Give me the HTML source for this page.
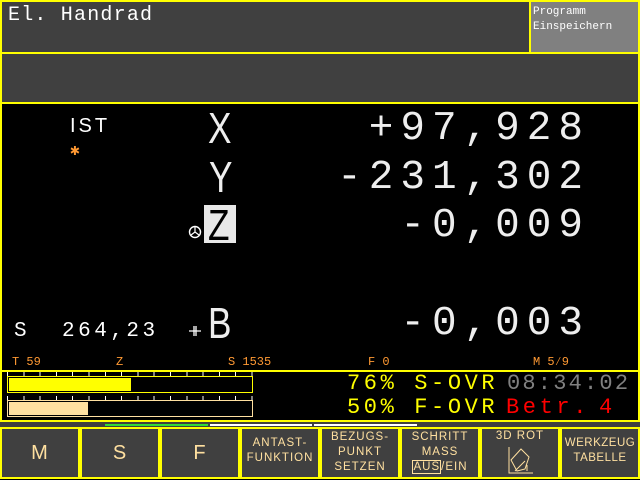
<!DOCTYPE html>
<html><head><meta charset="utf-8"><style>
*{margin:0;padding:0;box-sizing:border-box}
body{width:640px;height:480px;background:#000;position:relative;overflow:hidden;font-family:"Liberation Mono","DejaVu Sans Mono",monospace;color:#fff}
.a{position:absolute}
.big{position:absolute;right:50px;font-size:41px;letter-spacing:7px;line-height:1;white-space:pre;color:#eee}
.ax{position:absolute;font-size:44px;line-height:1;font-family:"Liberation Sans",sans-serif;transform:scaleX(0.8);transform-origin:left top;color:#eee}
.sk{position:absolute;top:427px;width:80px;height:52px;background:#404040;border:2px solid #ffff00;color:#ffe0a0;text-align:center;font-family:"Liberation Sans",sans-serif;font-size:11.5px;line-height:15px;letter-spacing:1px}
.or{position:absolute;top:355px;color:#ff9933;font-size:12px}
.tk{position:absolute;width:246px;height:4px;background:repeating-linear-gradient(90deg,#fff 0 1px,transparent 1px 16.3px)}
</style></head><body>
<div class="a" style="left:0;top:0;width:640px;height:104px;background:#ffff00"></div>
<div class="a" style="left:2px;top:2px;width:527px;height:50px;background:#404040"></div>
<div class="a" style="left:531px;top:2px;width:107px;height:50px;background:#808080"></div>
<div class="a" style="left:2px;top:54px;width:636px;height:48px;background:#404040"></div>
<div class="a" style="left:8px;top:4px;font-size:20px;letter-spacing:1.2px">El. Handrad</div>
<div class="a" style="left:533px;top:5px;font-size:11px;line-height:15px;color:#fff">Programm<br>Einspeichern</div>
<div class="a" style="left:0;top:104px;width:2px;height:320px;background:#ffff00"></div>
<div class="a" style="left:638px;top:104px;width:2px;height:320px;background:#ffff00"></div>
<div class="a" style="left:70px;top:115px;font-size:20px;letter-spacing:3px;font-family:'Liberation Sans',sans-serif">IST</div>
<div class="a" style="left:70px;top:140px;font-size:16px;color:#ff9933">✱</div>
<div class="ax" style="left:208px;top:107px">X</div>
<div class="ax" style="left:209px;top:156px">Y</div>
<div class="a" style="left:204px;top:205px;width:32px;height:38px;background:#e8e8e8"></div>
<div class="ax" style="left:208px;top:204px;color:#000">Z</div>
<svg class="a" style="left:188px;top:225px" width="14" height="14" viewBox="0 0 14 14"><circle cx="7" cy="7" r="5.5" fill="none" stroke="#fff" stroke-width="1.4"/><path d="M7 7V2M7 7L3 10M7 7L11 10" stroke="#fff" stroke-width="1.2"/></svg>
<div class="ax" style="left:208px;top:302px">B</div>
<svg class="a" style="left:188px;top:324px" width="14" height="14" viewBox="0 0 14 14"><path d="M1 7H13M6 2V12M8 2V12" stroke="#fff" stroke-width="1.3"/></svg>
<div class="a" style="left:14px;top:320px;font-size:21px">S</div>
<div class="a" style="left:62px;top:320px;font-size:21px;letter-spacing:3.5px">264,23</div>
<div class="big" style="top:109px">+97,928</div>
<div class="big" style="top:158px">-231,302</div>
<div class="big" style="top:206px">-0,009</div>
<div class="big" style="top:304px">-0,003</div>
<div class="or" style="left:12px">T 59</div>
<div class="or" style="left:116px">Z</div>
<div class="or" style="left:228px">S 1535</div>
<div class="or" style="left:368px">F 0</div>
<div class="or" style="left:533px">M 5⁄9</div>
<div class="a" style="left:0;top:370px;width:640px;height:2px;background:#ffff00"></div>
<div class="a" style="left:0;top:420px;width:640px;height:2px;background:#ffff00"></div>
<div class="a" style="left:7px;top:376px;width:246px;height:17px;border:1px solid #ffff00"></div>
<div class="a" style="left:9px;top:378px;width:122px;height:13px;background:#ffff00"></div>
<div class="a" style="left:7px;top:400px;width:246px;height:17px;border:1px solid #ffe0a0"></div>
<div class="a" style="left:9px;top:402px;width:79px;height:13px;background:#ffe0a0"></div>
<div class="tk" style="left:7px;top:372px"></div>
<div class="tk" style="left:7px;top:396px"></div>
<div class="a" style="left:347px;top:372px;font-size:22px;line-height:24px;color:#ffff00;letter-spacing:3.6px;white-space:pre">76% S-OVR</div>
<div class="a" style="left:347px;top:396px;font-size:22px;line-height:24px;color:#ffff00;letter-spacing:3.6px;white-space:pre">50% F-OVR</div>
<div class="a" style="left:507px;top:372px;font-size:22px;line-height:24px;color:#808080;letter-spacing:2.2px">08:34:02</div>
<div class="a" style="left:506px;top:396px;font-size:22px;line-height:24px;color:#ff0000;letter-spacing:3.6px;white-space:pre">Betr.</div>
<div class="a" style="left:599px;top:396px;font-size:22px;line-height:24px;color:#ff0000">4</div>
<div class="a" style="left:0;top:422px;width:640px;height:5px;background:#404040"></div>
<div class="a" style="left:105px;top:424px;width:103px;height:2px;background:#33dd33"></div>
<div class="a" style="left:210px;top:424px;width:102px;height:2px;background:#fff"></div>
<div class="a" style="left:314px;top:424px;width:103px;height:2px;background:#fff"></div>
<div class="sk" style="left:0;font-size:20px;line-height:48px">M</div>
<div class="sk" style="left:80px;font-size:20px;line-height:48px">S</div>
<div class="sk" style="left:160px;font-size:20px;line-height:48px">F</div>
<div class="sk" style="left:240px;padding-top:7px">ANTAST-<br>FUNKTION</div>
<div class="sk" style="left:320px;padding-top:1px">BEZUGS-<br>PUNKT<br>SETZEN</div>
<div class="sk" style="left:400px;padding-top:1px">SCHRITT<br>MASS<br><span style="border:1px solid #ffe0a0">AUS</span>/EIN</div>
<div class="sk" style="left:480px;padding-top:0">3D ROT
<svg style="display:block;margin:1px auto 0" width="30" height="30" viewBox="0 0 30 30"><path d="M4 2V28H28" fill="none" stroke="#ffe0a0"/><path d="M6 15L16 4L24 12L20 24L12 26Z" fill="none" stroke="#ffe0a0"/><path d="M10 26L20 16M22 20L22 26" stroke="#ffe0a0"/></svg></div>
<div class="sk" style="left:560px;padding-top:7px;letter-spacing:0.5px">WERKZEUG<br>TABELLE</div>
</body></html>
